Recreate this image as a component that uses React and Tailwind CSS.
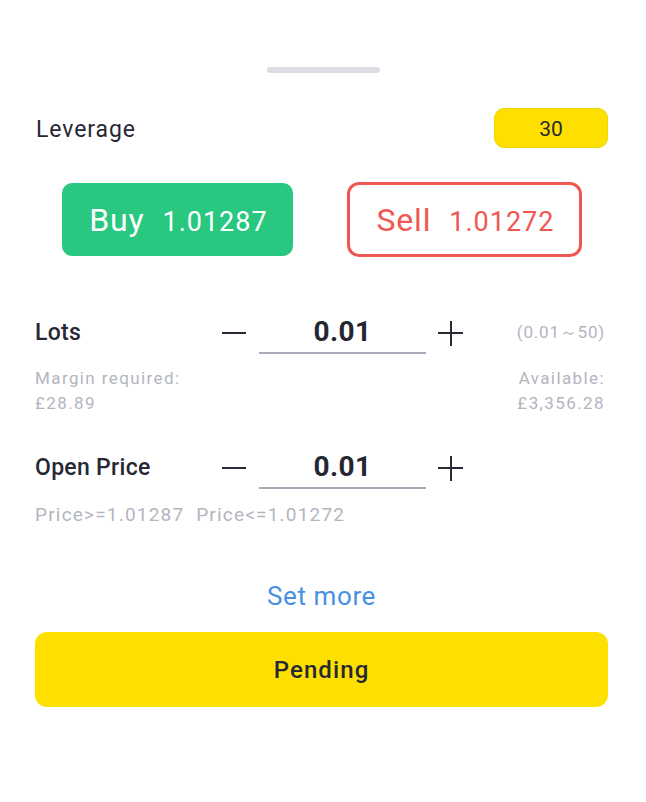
import React from 'react';

const font = { fontFamily: 'Roboto, "Noto Sans", sans-serif' };

const Stepper = ({ value }) => (
  <div className="flex items-center">
    <span className="w-[24px] h-[2px] bg-[#2a2b36]" />
    <div className="ml-[13px] w-[167px] h-[42px] border-b-2 border-[#a9abb8] flex items-center justify-center text-[28px] font-bold tracking-[0.4px] text-[#252631]">
      {value}
    </div>
    <span className="relative ml-[12px] w-[25px] h-[25px]">
      <span className="absolute left-0 top-[11.5px] w-[25px] h-[2px] bg-[#2a2b36]" />
      <span className="absolute top-0 left-[11.5px] w-[2px] h-[25px] bg-[#2a2b36]" />
    </span>
  </div>
);

export default function App() {
  return (
    <div className="w-[646px] h-[802px] bg-white pl-[35px] pr-[38px]" style={font}>
      <div className="pt-[67px] flex justify-center">
        <div className="w-[113px] h-[6px] rounded-full bg-[#dcdde2] ml-[3px]" />
      </div>

      <div className="mt-[35px] h-[40px] flex items-center justify-between">
        <span className="text-[23px] tracking-[0.9px] text-[#272833] ml-[1px] mt-[4px]">Leverage</span>
        <div className="w-[114px] h-[40px] pt-[3px] rounded-[10px] bg-[#fde000] border border-[#f1d500] flex items-center justify-center text-[21px] text-[#272833]">
          30
        </div>
      </div>

      <div className="mt-[34px] pl-[27px] flex items-center">
        <button className="w-[231px] h-[73px] rounded-[10px] bg-[#29c880] text-white flex items-center justify-center">
          <span className="flex items-baseline gap-[18px] pl-[2px] pt-[1px]">
            <span className="text-[32px] tracking-[0.8px]">Buy</span>
            <span className="text-[27px] tracking-[1px]">1.01287</span>
          </span>
        </button>
        <button className="ml-[54px] w-[235px] h-[75px] rounded-[12px] border-[3px] border-[#ef5753] text-[#ef5753] flex items-center justify-center">
          <span className="flex items-baseline gap-[18px] pl-[2px] pt-[1px]">
            <span className="text-[32px] tracking-[0.8px]">Sell</span>
            <span className="text-[27px] tracking-[1px]">1.01272</span>
          </span>
        </button>
      </div>

      <div className="mt-[55px] h-[42px] flex items-center">
        <span className="w-[187px] text-[23px] font-medium tracking-[0.3px] text-[#272833]">Lots</span>
        <Stepper value="0.01" />
        <span className="ml-auto mr-[3px] text-[17px] tracking-[0.8px] text-[#b3b5bf]">(0.01～50)</span>
      </div>

      <div className="mt-[12px] flex justify-between text-[17px] tracking-[1.4px] leading-[25px] text-[#b3b5bf]">
        <div>
          <div>Margin required:</div>
          <div>£28.89</div>
        </div>
        <div className="text-right mr-[3px]">
          <div>Available:</div>
          <div>£3,356.28</div>
        </div>
      </div>

      <div className="mt-[31px] h-[42px] flex items-center">
        <span className="w-[187px] text-[23px] font-medium tracking-[0.3px] text-[#272833]">Open Price</span>
        <Stepper value="0.01" />
      </div>

      <div className="mt-[14px] text-[19px] tracking-[1.2px] leading-[24px] text-[#b3b5bf]">
        Price&gt;=1.01287&nbsp;&nbsp;Price&lt;=1.01272
      </div>

      <div className="mt-[54px] text-center text-[26px] tracking-[0.6px] leading-[30px] text-[#4a90e2]">Set more</div>

      <button className="mt-[21px] w-full h-[75px] rounded-[12px] bg-[#fee000] text-[24px] font-medium tracking-[1.1px] text-[#272833]">
        Pending
      </button>
    </div>
  );
}
